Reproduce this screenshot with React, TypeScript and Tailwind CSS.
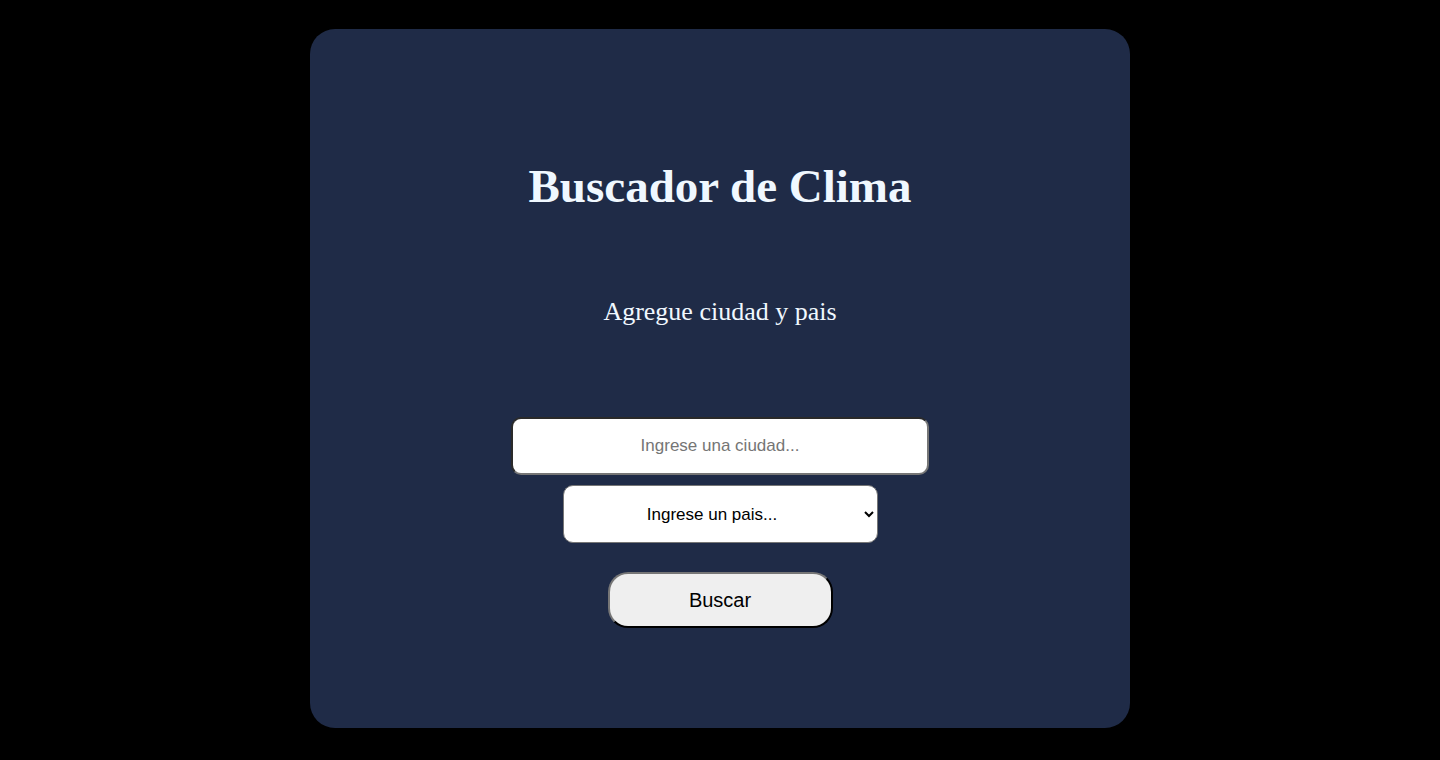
export default function App() {
  return (
    <div className="min-h-[760px] w-full bg-black pt-[29px] pb-[32px] font-['Liberation_Sans',Arial,sans-serif]">
      <div className="mx-auto flex h-[699px] w-[820px] flex-col items-center rounded-[25px] bg-[#1f2b47]">
        <h1 className="mt-[129px] font-['Liberation_Serif',Georgia,serif] text-[47px] leading-[56px] font-bold text-[#f0f8ff]">
          Buscador de Clima
        </h1>
        <p className="mt-[83px] font-['Liberation_Serif',Georgia,serif] text-[26px] leading-[30px] text-[#f0f8ff]">
          Agregue ciudad y pais
        </p>
        <form className="mt-[90px] flex flex-col items-center">
          <input
            type="text"
            placeholder="Ingrese una ciudad..."
            className="h-[58px] w-[418px] rounded-[10px] border-2 border-t-[#2a2a2a] border-l-[#2a2a2a] border-r-[#767676] border-b-[#767676] bg-white text-center text-[17px] text-black placeholder:text-[#757575] outline-none"
          />
          <select
            defaultValue=""
            className="mt-[10px] h-[58px] w-[315px] rounded-[10px] border border-[#767676] bg-white pr-1 text-center text-[17px] text-black"
          >
            <option value="">Ingrese un pais...</option>
            <option value="AR">Argentina</option>
            <option value="CO">Colombia</option>
            <option value="MX">México</option>
          </select>
          <button
            type="button"
            className="mt-[29px] h-[56px] w-[225px] rounded-[20px] border-2 border-t-[#767676] border-l-[#767676] border-r-black border-b-black bg-[#efefef] text-[20px] text-black"
          >
            Buscar
          </button>
        </form>
      </div>
    </div>
  );
}
